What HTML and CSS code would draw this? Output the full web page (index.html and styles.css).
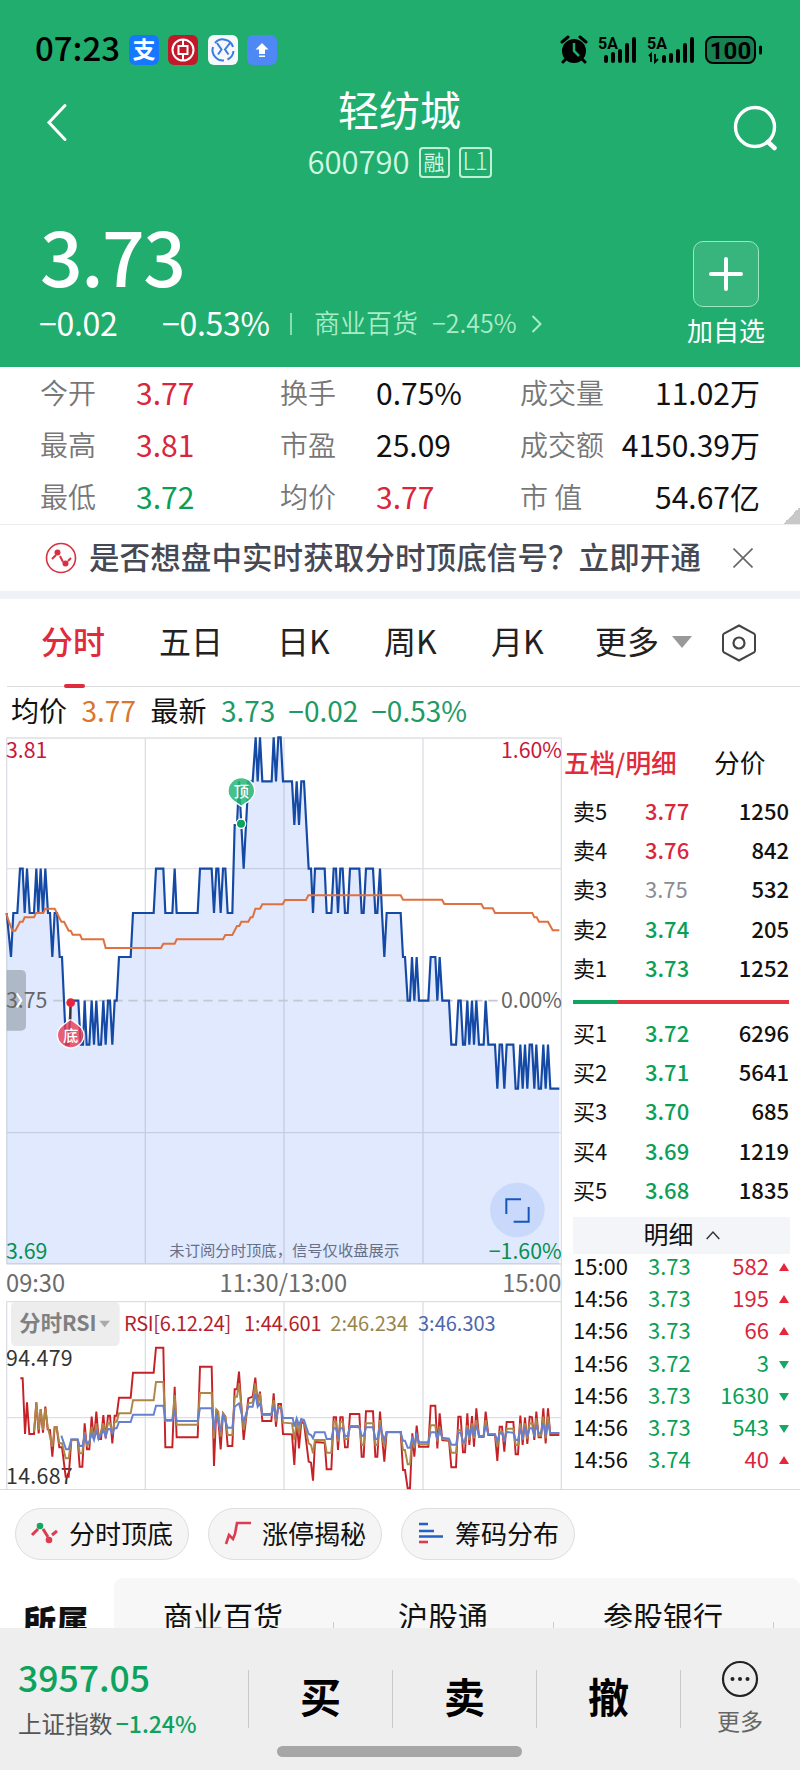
FILE: index.html
```html
<!DOCTYPE html>
<html lang="zh-CN">
<head>
  <meta charset="UTF-8" />
  <meta name="viewport" content="width=device-width, initial-scale=1.0"/>
  <title>轻纺城 600790</title>
  <link rel="stylesheet" href="styles.css">
</head>
<body>
  <!-- Header -->
  <header class="header">
    <div class="status-bar">
      <span class="clock">07:23</span>
      <span class="app-icon alipay">支</span>
      <span class="app-icon bank">
        <svg viewBox="0 0 30 30"><g fill="none" stroke="#fff" stroke-width="2"><circle cx="15" cy="15" r="10.5"/><rect x="10.5" y="11" width="9" height="8"/><path d="M15 5v6M15 19v6"/></g></svg>
      </span>
      <span class="app-icon rail">
        <svg viewBox="0 0 30 30"><g fill="none" stroke="#3a7be0" stroke-width="2"><path d="M7 8a10.500 10.500 0 0 1 18 4M25.500 16a10.500 10.500 0 0 1-6 8.500M16 25.500a10.500 10.500 0 0 1-11-13.500M9 8l4.500 6.500-3.500 5M22 8l-5 6.500 3.500 5"/></g></svg>
      </span>
      <span class="app-icon upload">
        <svg viewBox="0 0 30 30"><path fill="#fff" d="M15 8l6.500 6.500h-3.500V19h-6v-4.500H8.500zM12 20.500h6v1.500h-6z"/></svg>
      </span>
      <svg class="system-icons" viewBox="0 0 204 32" width="204" height="32">
        <circle cx="14" cy="17" r="12"/>
        <path d="M2 8l6-5M26 8l-6-5M6 25l-3 3M22 25l3 3" stroke="#000" stroke-width="3" stroke-linecap="round"/>
        <path d="M14 9v8l5 5" fill="none" stroke="#20ad6e" stroke-width="2.500"/>
        <text x="38" y="15" class="signal-text">5A</text>
        <path d="M46 27v-4M53 27v-7M60 27v-10M67 27v-16M74 27V5" stroke="#000" stroke-width="4" stroke-linecap="round"/>
        <text x="87" y="15" class="signal-text">5A</text>
        <path d="M89 22l2-2v8M95 20v8l3-3" stroke="#000" stroke-width="1.800" fill="none"/>
        <path d="M104 27v-4M111 27v-6M118 27v-10M125 27v-16M132 27V5" stroke="#000" stroke-width="4" stroke-linecap="round"/>
        <rect x="146" y="3" width="49" height="26" rx="7" fill="#000" fill-opacity=".25" stroke="#000" stroke-width="2"/>
        <path d="M200.500 13v6" stroke="#000" stroke-width="3" stroke-linecap="round"/>
        <text x="170.500" y="25" class="battery-text">100</text>
      </svg>
    </div>

    <div class="title-bar">
      <svg class="back" viewBox="0 0 24 40" width="24" height="40"><path d="M20 3.500L4 20.500 20 37.500" fill="none" stroke="#fff" stroke-width="3" stroke-linecap="round"/></svg>
      <div class="title">
        <h1>轻纺城</h1>
        <div class="code"><span>600790</span><i class="badge">融</i><i class="badge badge-l1">L1</i></div>
      </div>
      <svg class="search" viewBox="0 0 46 46" width="46" height="46"><circle cx="22" cy="22" r="19.500" fill="none" stroke="#fff" stroke-width="3.400"/><path d="M35 37l6.500 6" stroke="#fff" stroke-width="4.500" stroke-linecap="round"/></svg>
    </div>

    <div class="quote">
      <div class="quote-main">
        <div class="price">3.73</div>
        <div class="change">
          <span class="change-value">−0.02</span>
          <span class="change-rate">−0.53%</span>
          <i class="bar"></i>
          <span class="industry">商业百货</span>
          <span class="industry-rate">−2.45%</span>
          <svg viewBox="0 0 12 20" width="12" height="20"><path d="M1.500 2l8 8-8 8" fill="none" stroke="#a9ecc8" stroke-width="2"/></svg>
        </div>
      </div>
      <div class="add">
        <div class="add-box"><svg viewBox="0 0 36 36" width="36" height="36"><path d="M18 3v30M3 18h30" stroke="#fff" stroke-width="4" stroke-linecap="round"/></svg></div>
        <span>加自选</span>
      </div>
    </div>
  </header>

  <!-- Key figures -->
  <section class="stats">
    <span class="label">今开</span><span class="up">3.77</span><span class="label">换手</span><span>0.75%</span><span class="label">成交量</span><span class="right">11.02万</span>
    <span class="label">最高</span><span class="up">3.81</span><span class="label">市盈</span><span>25.09</span><span class="label">成交额</span><span class="right">4150.39万</span>
    <span class="label">最低</span><span class="down">3.72</span><span class="label">均价</span><span class="up">3.77</span><span class="label">市 值</span><span class="right">54.67亿</span>
  </section>

  <section class="notice">
    <svg viewBox="0 0 32 32" width="32" height="32"><circle cx="16" cy="16" r="14.500" fill="none" stroke="#d9303f" stroke-width="1.600"/><path d="M7 17l4-4M15 14l3 6M23 19l3-3" stroke="#d9303f" stroke-width="2"/><circle cx="12.500" cy="10.500" r="3" fill="#d9303f"/><circle cx="20.500" cy="21.500" r="3" fill="#d9303f"/></svg>
    <p>是否想盘中实时获取分时顶底信号？立即开通</p>
    <svg viewBox="0 0 20 20" width="20" height="20"><path d="M.500.500l19 19M19.500.500l-19 19" stroke="#666" stroke-width="1.600"/></svg>
  </section>

  <!-- Chart period tabs -->
  <nav class="tabs">
    <a class="tab active">分时</a>
    <a class="tab">五日</a>
    <a class="tab">日K</a>
    <a class="tab">周K</a>
    <a class="tab">月K</a>
    <a class="tab more">更多<svg viewBox="0 0 20 12" width="20" height="12"><path d="M0 0h20L10 12z" fill="#999"/></svg></a>
    <svg class="settings" viewBox="0 0 36 38" width="36" height="38"><path d="M18 1.500L33 9.500q1 .700 1 2v15q0 1.300-1 2L18 36.500 3 28.500q-1-.700-1-2v-15q0-1.300 1-2z" fill="none" stroke="#444" stroke-width="2"/><circle cx="18" cy="19" r="5.500" fill="none" stroke="#444" stroke-width="2.200"/></svg>
  </nav>

  <main class="market">
    <div class="chart-side">
      <div class="ticker">
        <span>均价</span><span class="orange">3.77</span><span>最新</span><span class="teal">3.73</span><span class="teal">−0.02</span><span class="teal">−0.53%</span>
      </div>

      <svg class="chart" viewBox="0 0 1695 2280" width="565" height="760">
        <path class="area" d="M20 1602V549L33 681L40 549H52L60 416H68L74 549L81 416L89 549H102L109 416L115 549L122 416L129 549L136 416L144 549H150L157 681L164 549H171L179 681H186L198 944H206L212 812H235L242 944H249L254 812L260 944H268L275 812L282 944L289 812L296 944H303L310 812L317 944L324 812H330L337 944L344 812H350L357 681H392L399 549H461L468 416H490L496 549H517L524 416L530 549H593L600 416H635L642 549L649 416H655L662 549L669 416H676L683 549H697L704 285H711L717 154L724 285L731 416L745 154H758L767 22L773 154L780 22L787 154H815L821 22L828 154L835 22H842L849 154H876L883 285L890 154L897 285L904 154H912L926 416H933L939 549L945 416H974L980 549H994L1001 416H1008L1014 549L1021 416H1028L1035 549H1043L1050 416H1078L1085 549H1091L1098 416H1119L1126 549H1132L1140 416L1146 549L1153 681L1160 549H1202L1209 681H1215L1223 812H1230L1236 681L1243 812L1250 681L1257 812H1285L1292 681H1306L1312 812L1319 681L1327 812H1347L1354 944H1368L1375 812H1382L1389 944H1395L1402 812L1408 944L1416 812L1422 944L1429 812L1437 944H1451L1457 812L1465 944H1485L1492 1076L1499 944H1506L1513 1076L1520 944H1540L1547 1076H1554L1561 944L1568 1076L1575 944L1582 1076L1589 944H1596L1603 1076L1609 944L1616 1076H1623L1630 944L1637 1076L1644 944L1651 1076H1678V1602Z"/>
        <path class="grid" d="M20 24H1684M20 416H1684M20 1208H1684M20 1602H1684M20 1715H1684M20 2063H1684M20 24V1602M436 24V1602M852 24V1602M1269 24V1602M20 1715V2278M436 1715V2278M852 1715V2278M1269 1715V2278M1684 24V2278"/>
        <path class="zero" d="M160 812H1500"/>
        <path class="price-line" d="M20 549L33 681L40 549H52L60 416H68L74 549L81 416L89 549H102L109 416L115 549L122 416L129 549L136 416L144 549H150L157 681L164 549H171L179 681H186L198 944H206L212 812H235L242 944H249L254 812L260 944H268L275 812L282 944L289 812L296 944H303L310 812L317 944L324 812H330L337 944L344 812H350L357 681H392L399 549H461L468 416H490L496 549H517L524 416L530 549H593L600 416H635L642 549L649 416H655L662 549L669 416H676L683 549H697L704 285H711L717 154L724 285L731 416L745 154H758L767 22L773 154L780 22L787 154H815L821 22L828 154L835 22H842L849 154H876L883 285L890 154L897 285L904 154H912L926 416H933L939 549L945 416H974L980 549H994L1001 416H1008L1014 549L1021 416H1028L1035 549H1043L1050 416H1078L1085 549H1091L1098 416H1119L1126 549H1132L1140 416L1146 549L1153 681L1160 549H1202L1209 681H1215L1223 812H1230L1236 681L1243 812L1250 681L1257 812H1285L1292 681H1306L1312 812L1319 681L1327 812H1347L1354 944H1368L1375 812H1382L1389 944H1395L1402 812L1408 944L1416 812L1422 944L1429 812L1437 944H1451L1457 812L1465 944H1485L1492 1076L1499 944H1506L1513 1076L1520 944H1540L1547 1076H1554L1561 944L1568 1076L1575 944L1582 1076L1589 944H1596L1603 1076L1609 944L1616 1076H1623L1630 944L1637 1076L1644 944L1651 1076H1678"/>
        <path class="avg-line" d="M20 549L22 562L37 602H46L60 575H68L74 562H102L108 549H130L136 536H164L184 575H192L206 602H212L218 614H240L246 628H310L317 654H483L490 641H524L530 628H669L676 615H697L711 588H718L724 575H745L752 562H758L766 536H780L787 523H848L855 510H918L925 496H1202L1209 509H1326L1333 522H1444L1451 535H1478L1485 549H1597L1603 562H1610L1617 575H1644L1658 601H1678"/>

        <!-- side drawer handle -->
        <path d="M20 720H62Q78 720 78 736V886Q78 902 62 902H20Z" fill="#8d97a3" fill-opacity=".6"/>
        <path d="M50 790l14 21-14 21" fill="none" stroke="#fff" stroke-width="6"/>

        <!-- top / bottom signals -->
        <path d="M702 214Q684 200 684 183a40 40 0 0 1 80 0Q764 200 746 214L724 229Z" fill="#27b675" fill-opacity=".85" stroke="#fff" stroke-width="4"/>
        <circle cx="723" cy="281" r="14" fill="#0ba35e" stroke="#fff" stroke-width="4"/>
        <text class="marker" x="724" y="202">顶</text>
        <path d="M190 884L212 868 234 884Q252 898 252 914a40 40 0 0 1-80 0Q172 898 190 884Z" fill="#e93b53" fill-opacity=".8" stroke="#fff" stroke-width="4"/>
        <path d="M212 820V868" stroke="#333" stroke-width="5"/>
        <circle cx="212" cy="818" r="13" fill="#e8243c"/>
        <text class="marker" x="212" y="932">底</text>

        <circle cx="1552" cy="1440" r="82" fill="#c9d9fb"/>
        <path d="M1519 1452V1408H1563M1586 1431V1475H1541" fill="none" stroke="#1556bd" stroke-width="6"/>

        <text class="scale up" x="18" y="83">3.81</text>
        <text class="scale gray" x="18" y="834">3.75</text>
        <text class="scale down" x="18" y="1586">3.69</text>
        <text class="scale up end" x="1686" y="83">1.60%</text>
        <text class="scale gray end" x="1686" y="834">0.00%</text>
        <text class="scale down end" x="1685" y="1587">−1.60%</text>
        <text class="tip" x="508" y="1577">未订阅分时顶底，信号仅收盘展示</text>
        <text class="time" x="18" y="1686">09:30</text>
        <text class="time middle" x="850" y="1686">11:30/13:00</text>
        <text class="time end" x="1684" y="1686">15:00</text>

        <!-- RSI -->
        <rect x="33" y="1716" width="326" height="132" rx="14" fill="#ededed"/>
        <text class="rsi-name" x="58" y="1804">分时RSI</text>
        <path d="M298 1772h32l-16 20z" fill="#aaa"/>
        <text class="rsi rsi-6" x="372" y="1803" textLength="322">RSI[6.12.24]</text>
        <text class="rsi rsi-6" x="732" y="1803">1:44.601</text>
        <text class="rsi rsi-12" x="991" y="1803">2:46.234</text>
        <text class="rsi rsi-24" x="1254" y="1803">3:46.303</text>
        <text class="scale dark" x="18" y="1907" textLength="200">94.479</text>
        <text class="scale dark" x="18" y="2263" textLength="200">14.687</text>
        <g class="rsi-lines" transform="translate(0 1530)">
          <polyline stroke="#c62127" points="61,415 68,415 75,582 81,487 88,582 102,582 109,487 116,580 122,507 129,578 136,500 143,568 150,570 157,650 164,562 170,562 178,622 186,622 197,710 206,710 214,600 233,600 239,680 247,680 254,550 261,628 268,628 275,530 282,600 289,515 296,597 303,597 310,525 317,595 324,527 330,527 337,610 344,527 350,527 357,473 392,473 399,398 461,398 468,323 490,323 496,622 517,622 524,440 530,592 593,592 600,380 635,380 642,678 649,508 655,540 662,628 669,520 676,530 683,618 697,618 704,448 711,448 717,395 731,600 745,475 758,470 766,413 773,490 780,455 787,543 814,543 821,460 828,560 835,492 843,492 849,582 876,583 883,675 890,540 897,625 904,545 912,550 926,665 933,668 939,722 945,606 974,608 980,688 994,688 1001,532 1008,532 1014,630 1021,532 1028,532 1035,622 1043,622 1050,522 1078,522 1085,650 1091,650 1098,514 1119,514 1126,650 1132,650 1140,515 1146,590 1153,665 1160,576 1202,576 1209,690 1215,690 1223,745 1230,745 1237,580 1243,650 1250,557 1257,620 1285,620 1292,497 1306,497 1312,625 1319,520 1327,600 1347,602 1354,682 1368,682 1375,530 1382,530 1389,637 1395,637 1402,520 1408,615 1416,528 1422,620 1429,505 1437,590 1451,590 1457,515 1465,585 1485,585 1492,663 1499,560 1506,560 1513,635 1520,546 1540,546 1547,643 1554,643 1561,527 1568,615 1575,533 1582,612 1589,530 1596,532 1603,600 1609,515 1616,592 1623,592 1630,505 1637,610 1644,505 1651,585 1678,585"/>
          <polyline stroke="#ad8748" points="102,575 109,487 116,570 122,507 129,570 136,505 143,560 157,620 164,562 170,562 178,610 186,610 197,655 206,655 214,600 233,600 239,640 247,640 254,575 261,615 268,610 275,560 282,595 289,550 296,597 310,550 317,585 324,550 330,550 337,580 344,545 350,545 357,520 392,520 399,481 461,481 468,426 490,426 496,542 517,542 524,465 530,554 593,554 600,459 635,459 642,595 649,508 655,515 662,590 669,520 676,530 683,585 697,585 704,470 711,470 717,430 731,570 745,490 758,487 766,430 773,495 780,460 787,525 814,525 821,480 828,545 835,500 843,500 849,548 876,550 883,600 890,545 897,580 904,540 912,545 926,610 933,615 939,640 945,600 974,600 980,638 994,638 1001,545 1008,545 1014,605 1021,545 1028,545 1035,597 1043,597 1050,558 1078,558 1085,615 1091,615 1098,550 1119,550 1126,615 1132,615 1140,540 1146,590 1153,620 1160,577 1202,577 1209,630 1215,630 1223,673 1230,673 1237,590 1243,625 1250,580 1257,613 1285,613 1292,556 1306,556 1312,605 1319,560 1327,597 1347,600 1354,638 1368,638 1375,570 1382,570 1389,610 1395,610 1402,555 1408,600 1416,550 1422,595 1429,540 1437,588 1451,588 1457,540 1465,583 1485,583 1492,620 1499,575 1506,575 1513,605 1520,566 1540,566 1547,615 1554,615 1561,550 1568,600 1575,550 1582,597 1589,550 1596,550 1603,590 1609,535 1616,587 1623,587 1630,530 1637,595 1644,530 1651,580 1678,580"/>
          <polyline stroke="#6680cf" points="184,587 198,628 206,628 214,598 233,598 239,618 247,618 254,590 261,610 268,605 275,580 282,600 289,570 296,597 310,570 317,590 324,567 330,567 337,580 344,565 350,565 357,546 392,546 399,524 461,524 468,497 490,497 496,540 517,540 524,510 530,543 593,543 600,505 635,505 642,570 649,520 662,575 669,523 683,563 697,563 704,500 717,490 731,545 745,500 758,500 766,460 773,500 780,490 787,522 814,522 821,500 828,535 835,505 843,505 849,534 878,534 883,560 890,535 897,555 904,537 912,540 926,582 933,585 939,595 945,577 974,577 980,597 994,597 1001,565 1008,565 1014,590 1021,565 1028,565 1035,588 1043,588 1050,560 1078,562 1085,587 1091,587 1098,562 1119,562 1126,597 1132,597 1140,560 1153,600 1160,576 1202,576 1209,602 1215,602 1223,623 1230,623 1237,590 1243,615 1250,585 1257,607 1285,607 1292,577 1306,577 1312,597 1319,570 1327,593 1347,596 1354,614 1368,614 1375,578 1382,578 1389,605 1395,605 1402,565 1408,592 1416,560 1422,588 1429,555 1437,588 1451,588 1457,555 1465,583 1485,583 1492,603 1499,580 1506,580 1513,600 1520,576 1540,578 1547,600 1554,600 1561,565 1568,590 1575,565 1582,588 1589,565 1596,565 1603,583 1609,555 1616,580 1623,580 1630,550 1637,585 1644,550 1651,579 1678,579"/>
        </g>
      </svg>
    </div>

    <!-- Order book -->
    <aside class="book">
      <div class="book-tabs"><span class="active">五档/明细</span><span>分价</span></div>
      <div class="orders">
        <div class="order"><span>卖5</span><span class="up">3.77</span><b>1250</b></div>
        <div class="order"><span>卖4</span><span class="up">3.76</span><b>842</b></div>
        <div class="order"><span>卖3</span><span class="flat">3.75</span><b>532</b></div>
        <div class="order"><span>卖2</span><span class="down">3.74</span><b>205</b></div>
        <div class="order"><span>卖1</span><span class="down">3.73</span><b>1252</b></div>
      </div>
      <div class="ratio"></div>
      <div class="orders">
        <div class="order"><span>买1</span><span class="down">3.72</span><b>6296</b></div>
        <div class="order"><span>买2</span><span class="down">3.71</span><b>5641</b></div>
        <div class="order"><span>买3</span><span class="down">3.70</span><b>685</b></div>
        <div class="order"><span>买4</span><span class="down">3.69</span><b>1219</b></div>
        <div class="order"><span>买5</span><span class="down">3.68</span><b>1835</b></div>
      </div>
      <div class="detail-head"><span>明细</span><svg viewBox="0 0 14 10" width="14" height="10"><path d="M.700 9L7 2l6.300 7" fill="none" stroke="#333" stroke-width="1.500"/></svg></div>
      <div class="trade"><span>15:00</span><span class="down">3.73</span><span class="qty up">582</span><i class="tri-up"></i></div>
      <div class="trade"><span>14:56</span><span class="down">3.73</span><span class="qty up">195</span><i class="tri-up"></i></div>
      <div class="trade"><span>14:56</span><span class="down">3.73</span><span class="qty up">66</span><i class="tri-up"></i></div>
      <div class="trade"><span>14:56</span><span class="down">3.72</span><span class="qty down">3</span><i class="tri-down"></i></div>
      <div class="trade"><span>14:56</span><span class="down">3.73</span><span class="qty down">1630</span><i class="tri-down"></i></div>
      <div class="trade"><span>14:56</span><span class="down">3.73</span><span class="qty down">543</span><i class="tri-down"></i></div>
      <div class="trade"><span>14:56</span><span class="down">3.74</span><span class="qty up">40</span><i class="tri-up"></i></div>
    </aside>
  </main>

  <div class="tools">
    <a class="pill"><svg viewBox="0 0 28 24" width="28" height="24"><path d="M2 14l6-6M13 8l5 8M22 14l5-4" stroke="#dc3c50" stroke-width="3"/><circle cx="10" cy="5" r="3.300" fill="#12a763"/><circle cx="19" cy="19" r="3.300" fill="#dc3c50"/></svg>分时顶底</a>
    <a class="pill"><svg viewBox="0 0 28 24" width="28" height="24"><path d="M3 23l3-9 4 4 2-5 2-11h14" fill="none" stroke="#dc3c50" stroke-width="2.600"/></svg>涨停揭秘</a>
    <a class="pill"><svg viewBox="0 0 28 24" width="28" height="24"><path d="M3 3h9M3 10h15M3 15.500h24" stroke="#2560c4" stroke-width="2.600"/><path d="M3 21h9" stroke="#dc3c50" stroke-width="2.600"/></svg>筹码分布</a>
  </div>

  <section class="sectors">
    <h2>所属</h2>
    <div class="sector-list"><span>商业百货</span><span>沪股通</span><span>参股银行</span></div>
  </section>

  <!-- Bottom bar -->
  <footer class="footer">
    <div class="actions">
      <div class="index">
        <strong>3957.05</strong>
        <p>上证指数 <span>−1.24%</span></p>
      </div>
      <a class="action">买</a>
      <a class="action">卖</a>
      <a class="action">撤</a>
      <a class="action-more">
        <svg viewBox="0 0 38 38" width="38" height="38"><circle cx="19" cy="19" r="17" fill="none" stroke="#222" stroke-width="2.200"/><g fill="#222"><circle cx="11.500" cy="19" r="2"/><circle cx="19" cy="19" r="2"/><circle cx="26.500" cy="19" r="2"/></g></svg>
        <span>更多</span>
      </a>
    </div>
    <div class="home-bar"></div>
  </footer>
</body>
</html>
```

FILE: styles.css
```css
* {
  box-sizing: border-box;
}
body {
  width: 800px;
  height: 1770px;
  margin: 0;
  overflow: hidden;
  background: #fff;
  color: #111;
  font-family: "Noto Sans CJK SC", sans-serif;
  line-height: 1;
  display: flex;
  flex-direction: column;
}
h1, h2, p {
  margin: 0;
}
i {
  font-style: normal;
}
svg {
  display: block;
  flex: none;
}
span, a {
  white-space: nowrap;
}
.up {
  color: #d9263c;
  fill: #c9163a;
}
.down {
  color: #0a9f58;
  fill: #078f50;
}
.flat {
  color: #8c8c8c;
}

/* Header */
.header {
  flex: none;
  height: 367px;
  background: #20ad6e;
  color: #fff;
}
.status-bar {
  display: flex;
  align-items: center;
  height: 70px;
  padding: 30px 36px 0 35px;
}
.clock {
  width: 94px;
  margin-top: -5px;
  color: #000;
  font-size: 33px;
  font-weight: 500;
}
.app-icon {
  width: 30px;
  height: 30px;
  margin-right: 9.3px;
  border-radius: 6px;
}
.alipay {
  background: #1677ff;
  font-size: 23px;
  font-weight: bold;
  line-height: 27px;
  text-align: center;
}
.bank {
  background: #c1192a;
}
.rail {
  background: #f6f8fb;
}
.upload {
  background: #4d88f5;
}
.system-icons {
  margin-left: auto;
}
.signal-text {
  font: bold 16px Roboto, sans-serif;
}
.battery-text {
  font: bold 24px Roboto, sans-serif;
  text-anchor: middle;
}
.title-bar {
  display: flex;
  justify-content: space-between;
  height: 130px;
  padding: 0 21px 0 45px;
}
.back {
  margin-top: 32px;
}
.search {
  margin-top: 35px;
}
.title {
  margin-left: -3px;
  padding-top: 18px;
  text-align: center;
}
h1 {
  font-size: 41px;
  font-weight: 400;
}
.code {
  display: flex;
  align-items: center;
  margin-top: 18px;
  color: #d3f8e3;
  font-size: 31px;
  font-weight: 350;
}
.code span {
  line-height: 26px;
  margin-top: -4px;
}
.badge {
  width: 31px;
  height: 31px;
  margin-left: 9px;
  border: 2px solid #c0f1d6;
  border-radius: 4px;
  font-size: 21px;
  font-weight: 400;
  line-height: 24px;
}
.badge-l1 {
  width: 33px;
  font-size: 24px;
  font-weight: 300;
  line-height: 22px;
}
.quote {
  display: flex;
  justify-content: space-between;
  height: 167px;
  padding-left: 40px;
}
.price {
  margin-top: 17px;
  font-size: 75px;
  font-weight: 500;
  letter-spacing: -1.5px;
}
.change {
  display: flex;
  align-items: center;
  height: 36px;
  margin-top: 14px;
  font-size: 32px;
  letter-spacing: -.3px;
}
.change span {
  margin-top: -4px;
}
.change .change-value {
  width: 123px;
  margin-left: -1px;
}
.change .change-rate {
  width: 105px;
}
.bar {
  width: 2px;
  height: 22px;
  margin: 0 22px 0 23px;
  background: #86dfb0;
}
.change .industry,
.change .industry-rate {
  color: #a9ecc8;
  font-size: 26px;
  font-weight: 350;
  letter-spacing: 0;
  margin-right: 14px;
}
.change .industry-rate {
  font-size: 25px;
}
.add {
  width: 148px;
  padding-top: 41px;
  font-size: 26px;
  text-align: center;
}
.add-box {
  display: flex;
  align-items: center;
  justify-content: center;
  width: 66px;
  height: 66px;
  margin: 0 auto 10px 41px;
  border: 1.5px solid #9be8c0;
  border-radius: 10px;
  background: #38b47d;
}

/* Key figures */
.stats {
  flex: none;
  display: grid;
  grid-template-columns: 96px 144px 96px 144px 90px 150px;
  grid-auto-rows: 52.3px;
  align-items: center;
  height: 158px;
  padding-left: 40px;
  border-bottom: 1px solid #ebebeb;
  background: linear-gradient(135deg, transparent 50%, #c8c8c8 50%) right bottom / 17px 17px no-repeat;
  font-size: 30px;
}
.stats span {
  margin-top: -3px;
}
.stats .label {
  color: #777;
  font-size: 28px;
  font-weight: 350;
}
.stats .right {
  justify-self: end;
}
.notice {
  flex: none;
  display: flex;
  align-items: center;
  height: 74px;
  padding-left: 45px;
  border-bottom: 8px solid #f0f1f6;
  color: #464954;
  font-size: 30.5px;
  font-weight: 500;
}
.notice p {
  width: 644px;
  margin: -4px 0 0 12px;
  letter-spacing: .1px;
}

/* Period tabs */
.tabs {
  flex: none;
  display: flex;
  align-items: center;
  height: 88px;
  margin-left: 7px;
  padding-left: 34px;
  border-bottom: 1.5px solid #dcdcdc;
  color: #222;
  font-size: 32px;
}
.tab {
  position: relative;
  width: 118px;
  margin-top: -6px;
}
.tab:nth-child(3) { width: 107px; }
.tab:nth-child(4) { width: 107px; }
.tab:nth-child(5) { width: 104px; }
.tab.active {
  color: #e02b3c;
  font-weight: 500;
}
.tab.active::after {
  content: "";
  position: absolute;
  left: 23px;
  bottom: -32px;
  width: 21px;
  height: 4px;
  border-radius: 2px;
  background: #e02b3c;
}
.tab.more {
  display: flex;
  align-items: center;
  gap: 13px;
  width: 126px;
}
.more svg {
  margin-top: 5px;
}

/* Charts */
.market {
  flex: none;
  display: flex;
  height: 803px;
  border-bottom: 1.5px solid #dcdcdc;
}
.chart-side {
  width: 565px;
}
.ticker {
  display: flex;
  gap: 14.5px;
  height: 43px;
  padding: 9px 0 0 11px;
  font-size: 28px;
}
.ticker .teal {
  margin-right: -1.5px;
}
.orange {
  color: #d9762d;
}
.teal {
  color: #1d9a66;
}
.area {
  fill: #e0e9fd;
}
.grid {
  fill: none;
  stroke: #55607a;
  stroke-opacity: .2;
  stroke-width: 4;
}
.zero {
  stroke: #c3c8d3;
  stroke-width: 5;
  stroke-dasharray: 28 17;
}
.price-line {
  fill: none;
  stroke: #1449a5;
  stroke-width: 6.5;
}
.avg-line {
  fill: none;
  stroke: #df703f;
  stroke-width: 6;
}
.marker {
  font-size: 46px;
  font-weight: 500;
  fill: #fff;
  text-anchor: middle;
}
.scale {
  font-size: 64px;
}
.gray {
  fill: #666;
}
.dark {
  fill: #333;
}
.time {
  font-size: 71px;
  fill: #6b6b6b;
}
.middle {
  text-anchor: middle;
}
.end {
  text-anchor: end;
}
.tip {
  font-size: 46px;
  fill: #667089;
}
.rsi-name {
  font-size: 64px;
  font-weight: bold;
  fill: #808080;
}
.rsi {
  font-size: 60px;
}
.rsi-6 {
  fill: #b41f2b;
}
.rsi-12 {
  fill: #98864d;
}
.rsi-24 {
  fill: #4f66ac;
}
.rsi-lines {
  fill: none;
  stroke-width: 5.8;
}

/* Order book */
.book {
  width: 235px;
  padding: 62px 11px 0 8px;
  font-size: 22px;
}
.book-tabs {
  display: flex;
  height: 43px;
  margin-left: -9px;
  font-size: 25.7px;
}
.book-tabs .active {
  width: 150px;
  color: #e02b3c;
  font-weight: 500;
}
.order {
  display: flex;
  height: 39.4px;
  align-items: center;
}
.order span, .order b {
  margin-top: -4px;
}
.order span:first-child {
  width: 72px;
}
.order b {
  margin-left: auto;
  font-weight: 500;
}
.order .up, .order .down {
  font-weight: 500;
}
.ratio {
  height: 4px;
  margin: 11px 0 10px;
  background: linear-gradient(90deg, #0fa45f 45px, #e5363f 45px);
}
.detail-head {
  display: flex;
  align-items: center;
  justify-content: center;
  gap: 12px;
  height: 37px;
  margin-top: 6px;
  margin-right: -1px;
  background: #f4f5f8;
  font-size: 25px;
}
.detail-head span {
  margin-top: -3px;
}
.trade {
  display: flex;
  align-items: center;
  height: 32.2px;
}
.detail-head + .trade {
  margin-top: -3px;
}
.trade span {
  margin-top: -4px;
}
.trade span:first-child {
  width: 75px;
}
.trade .qty {
  width: 60px;
  text-align: right;
  margin-left: auto;
  margin-right: 10px;
}
.tri-up, .tri-down {
  border: 5.5px solid transparent;
}
.tri-up {
  border-top: 0;
  border-bottom: 8px solid #e5263c;
}
.tri-down {
  border-bottom: 0;
  border-top: 8px solid #14a866;
  margin-top: 3px;
}

.tools {
  flex: none;
  display: flex;
  gap: 19px;
  padding: 18px 0 18px 15px;
}
.pill {
  display: flex;
  align-items: center;
  gap: 11px;
  width: 174px;
  height: 52px;
  padding: 0 0 3px 14px;
  border: 1.5px solid #dedede;
  border-radius: 26px;
  background: #f5f5f5;
  font-size: 26px;
}
.sectors {
  display: flex;
  height: 50px;
  overflow: hidden;
}
h2 {
  width: 114px;
  padding: 26px 0 0 23px;
  font-size: 33px;
  font-weight: 900;
}
.sector-list {
  display: flex;
  flex: 1;
  height: 100px;
  border-radius: 9px;
  background: #f7f7f7;
  font-size: 30px;
}
.sector-list span {
  width: 220px;
  padding: 22px 2px 0 0;
  text-align: center;
  background: linear-gradient(#ccc, #ccc) right 44px / 1px 40px no-repeat;
}

/* Bottom bar */
.footer {
  flex: none;
  height: 142px;
  background: #eee;
}
.actions {
  display: flex;
  height: 118px;
  padding-top: 42px;
}
.index {
  width: 248px;
  padding-left: 18px;
  margin-top: -11px;
}
.index strong {
  display: block;
  color: #0ba35e;
  font-size: 35.5px;
  font-weight: 500;
}
.index p {
  margin-top: 17px;
  color: #555;
  font-size: 23.6px;
}
.index p span {
  margin-left: -2px;
  color: #0ba35e;
  font-size: 23px;
  font-weight: 500;
}
.action {
  width: 144px;
  height: 58px;
  border-left: 1.5px solid #c9c9c9;
  color: #000;
  font-size: 41px;
  font-weight: 600;
  line-height: 51px;
  text-align: center;
}
.action-more {
  display: flex;
  flex-direction: column;
  align-items: center;
  width: 119px;
  height: 58px;
  border-left: 1.5px solid #c9c9c9;
  color: #666;
  font-size: 23px;
}
.action-more svg {
  margin: -10px 0 11px;
}
.home-bar {
  width: 245px;
  height: 11px;
  margin-left: 277px;
  border-radius: 6px;
  background: #a6a6a6;
}
```
